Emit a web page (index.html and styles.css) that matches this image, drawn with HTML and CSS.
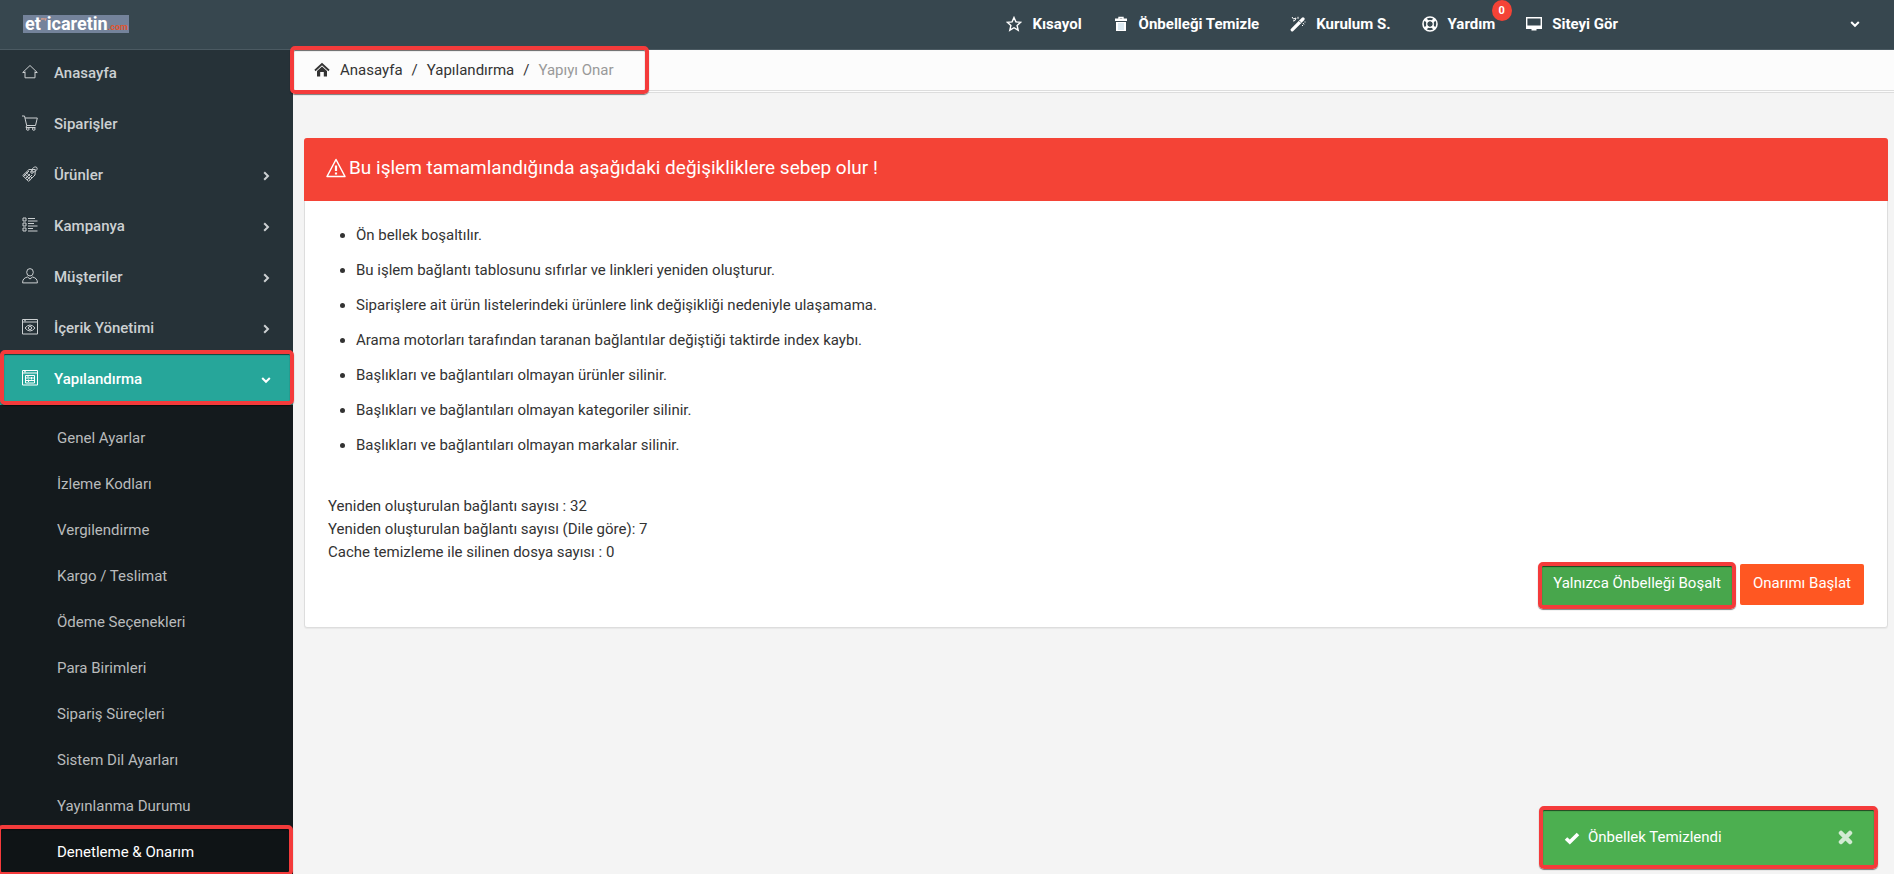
FILE: index.html
```html
<!DOCTYPE html>
<html lang="tr">
<head>
<meta charset="utf-8">
<title>Yapıyı Onar</title>
<link rel="stylesheet" href="styles.css">
</head>
<body>
<header class="topbar">
  <a class="logo" href="#">et<span class="logo-my">my</span>icaretin<span class="logo-com">.com</span></a>
  <nav class="topnav">
    <a href="#"><svg class="icon" viewBox="0 0 16 16"><path d="M8 1.500l1.900 4.400 4.800.4-3.600 3.200 1.100 4.700L8 11.700l-4.200 2.500 1.100-4.700L1.300 6.300l4.800-.4z" fill="none" stroke="currentColor" stroke-width="1.400"/></svg>Kısayol</a>
    <a href="#"><svg class="icon" viewBox="0 0 16 16"><path d="M6 3V1.500h4V3" fill="none" stroke="currentColor" stroke-width="1.400"/><path d="M2 2.500h12v2.500H2zM3 6h10v9H3z" fill="currentColor"/><path d="M6 7v7M8 7v7M10 7v7" stroke="#a5c8dc" stroke-width=".8"/></svg>Önbelleği Temizle</a>
    <a href="#"><svg class="icon" viewBox="0 0 16 16"><path d="M2.200 13.800L13 3" stroke="currentColor" stroke-width="3.200" stroke-linecap="round"/><path d="M9.500 5.200l1.400 1.400" stroke="#37474f"/><path d="M2 1l1.500 2L6 2 5 4.500 3 5M8 .8v2M13 7l1 1.500M15 5.500v1M12.500 9v1" fill="none" stroke="currentColor"/></svg>Kurulum S.</a>
    <a href="#" class="help"><svg class="icon" viewBox="0 0 16 16" fill="none" stroke="currentColor"><circle cx="8" cy="8" r="7" stroke-width="1.600"/><circle cx="8" cy="8" r="3.300" stroke-width="1.300"/><path d="M3 3l3 3M13 3l-3 3M3 13l3-3M13 13l-3-3" stroke-width="3"/></svg>Yardım<span class="badge">0</span></a>
    <a href="#"><svg class="icon" viewBox="0 0 16 16"><path d="M.7 1.700h14.600v10H.7z" fill="none" stroke="currentColor" stroke-width="1.400"/><path d="M0 9.500h16V13h-5.500v1.500h-5V13H0z" fill="currentColor"/></svg>Siteyi Gör</a>
  </nav>
  <button class="account" type="button" aria-label="Hesap"><svg class="arrow" viewBox="0 0 10 10"><path d="M1.200 3L5 6.800 8.800 3"/></svg></button>
</header>
<div class="layout">
  <aside class="sidebar">
    <ul class="menu">
      <li><a href="#"><svg class="icon" viewBox="0 0 16 16"><path d="M3 7.500v6.300h10V7.500M.7 8.500L8 1.500l7.300 7H13M.7 8.500H3"/></svg>Anasayfa</a></li>
      <li><a href="#"><svg class="icon" viewBox="0 0 16 16"><path d="M0 1h2.500l2.200 9.500h8.800L15.300 3H3M4.700 10.500l-.7 2h9.500"/><circle cx="5.800" cy="14" r="1.300"/><circle cx="11.800" cy="14" r="1.300"/></svg>Siparişler</a></li>
      <li><a href="#"><svg class="icon" viewBox="0 0 16 16"><path d="M7 3.500L.8 9.500 6.500 15.300 13 9l.3-5.500zM2.500 8l6 5.800M4 6.500l6 5.500M1.500 10.500L7 5M3.500 12.500L8 8M5 14l5-5"/><circle cx="10" cy="6" r="1.300"/><path d="M10 6c-1-3 2-5.500 4-5s1.500 4-2.500 5"/></svg>Ürünler<svg class="arrow" viewBox="0 0 10 10"><path d="M3.200 1.200L7 5 3.200 8.800"/></svg></a></li>
      <li><a href="#"><svg class="icon" viewBox="0 0 16 16"><path d="M1 1h3v3H1zM1 6h3v3H1zM1 11h3v3H1zM6 1.500h7M6 4h9.500M6 6.500h6M6 9h9.500M6 11.500h5M6 14h9.500"/></svg>Kampanya<svg class="arrow" viewBox="0 0 10 10"><path d="M3.200 1.200L7 5 3.200 8.800"/></svg></a></li>
      <li><a href="#"><svg class="icon" viewBox="0 0 16 16"><ellipse cx="8" cy="4.300" rx="3.300" ry="3.700"/><path d="M5.500 9C2 9.800.6 11.500.6 14.900h14.800c0-3.400-1.400-5.100-4.900-5.900L8 11z"/></svg>Müşteriler<svg class="arrow" viewBox="0 0 10 10"><path d="M3.200 1.200L7 5 3.200 8.800"/></svg></a></li>
      <li><a href="#"><svg class="icon" viewBox="0 0 16 16"><path d="M.5.500h15v14.500H.5zM.5 3h15M2 1.800h2M3 9q5-6 10 0-5 6-10 0z"/><circle cx="8" cy="9" r="1.600"/></svg>İçerik Yönetimi<svg class="arrow" viewBox="0 0 10 10"><path d="M3.200 1.200L7 5 3.200 8.800"/></svg></a></li>
      <li class="open marked"><a href="#"><svg class="icon" viewBox="0 0 16 16"><path d="M.5.500h15v14.500H.5zM.5 3h15M2 1.800h2M3.500 5.500h9v7.500h-9zM3.500 8h9M3.500 10.500h9M6 5v2.500M9.500 7v2.500M6.500 9.500v2.500"/></svg>Yapılandırma<svg class="arrow" viewBox="0 0 10 10"><path d="M1.200 3L5 6.800 8.800 3"/></svg></a></li>
    </ul>
    <ul class="submenu">
      <li><a href="#">Genel Ayarlar</a></li>
      <li><a href="#">İzleme Kodları</a></li>
      <li><a href="#">Vergilendirme</a></li>
      <li><a href="#">Kargo / Teslimat</a></li>
      <li><a href="#">Ödeme Seçenekleri</a></li>
      <li><a href="#">Para Birimleri</a></li>
      <li><a href="#">Sipariş Süreçleri</a></li>
      <li><a href="#">Sistem Dil Ayarları</a></li>
      <li><a href="#">Yayınlanma Durumu</a></li>
      <li class="current marked"><a href="#">Denetleme &amp; Onarım</a></li>
    </ul>
  </aside>
  <main class="content">
    <div class="crumb-bar">
      <nav class="crumbs marked">
        <a href="#"><svg class="icon" viewBox="0 0 16 16"><path d="M1 8.500L8 2l7 6.500" fill="none" stroke="currentColor" stroke-width="1.800"/><path d="M3 9l5-4.500L13 9v5.500H9.800V10H6.200v4.500H3z" fill="currentColor"/></svg>Anasayfa</a>
        <span>/</span><a href="#">Yapılandırma</a><span>/</span><span class="here">Yapıyı Onar</span>
      </nav>
    </div>
    <section class="panel">
      <h1 class="panel-head"><svg class="warn" viewBox="0 0 20 20"><path d="M10 1.500L19 18.500H1z" fill="none" stroke="currentColor" stroke-width="1.500" stroke-linejoin="round"/><path d="M10 7.500v5.500M10 14.500v2" stroke="currentColor" stroke-width="2.200"/></svg>Bu işlem tamamlandığında aşağıdaki değişikliklere sebep olur !</h1>
      <div class="panel-body">
        <ul class="effects">
          <li>Ön bellek boşaltılır.</li>
          <li>Bu işlem bağlantı tablosunu sıfırlar ve linkleri yeniden oluşturur.</li>
          <li>Siparişlere ait ürün listelerindeki ürünlere link değişikliği nedeniyle ulaşamama.</li>
          <li>Arama motorları tarafından taranan bağlantılar değiştiği taktirde index kaybı.</li>
          <li>Başlıkları ve bağlantıları olmayan ürünler silinir.</li>
          <li>Başlıkları ve bağlantıları olmayan kategoriler silinir.</li>
          <li>Başlıkları ve bağlantıları olmayan markalar silinir.</li>
        </ul>
        <p class="result">Yeniden oluşturulan bağlantı sayısı : 32<br>Yeniden oluşturulan bağlantı sayısı (Dile göre): 7<br>Cache temizleme ile silinen dosya sayısı : 0</p>
        <div class="actions">
          <button class="btn btn-green marked" type="button">Yalnızca Önbelleği Boşalt</button>
          <button class="btn btn-orange" type="button">Onarımı Başlat</button>
        </div>
      </div>
    </section>
  </main>
</div>
<div class="toast marked" role="status">
  <svg class="icon" viewBox="0 0 16 16"><path d="M2 8.500l3.800 3.500L14 4" fill="none" stroke="currentColor" stroke-width="3.600"/></svg>
  <span>Önbellek Temizlendi</span>
  <button class="close" type="button" aria-label="Kapat"><svg class="icon" viewBox="0 0 16 16"><path d="M3 3l9 9M12 3L3 12" stroke="currentColor" stroke-width="4.500" stroke-linecap="round"/></svg></button>
</div>
</body>
</html>
```
FILE: styles.css
```css
* { box-sizing: border-box; }

body {
  margin: 0;
  height: 100vh;
  overflow: hidden;
  display: flex;
  flex-direction: column;
  background: #f4f4f4;
  color: #333;
  font: 15px/23px Roboto, sans-serif;
}

a { color: inherit; text-decoration: none; }
ul { margin: 0; padding: 0; list-style: none; }
button { border: 0; padding: 0; background: none; color: inherit; font: inherit; cursor: pointer; }
.icon { width: 16px; height: 16px; flex: none; }
.arrow { width: 10px; height: 10px; fill: none; stroke: currentColor; stroke-width: 2; }

/* Red highlight frame */
.marked { position: relative; }
.marked::after {
  content: "";
  position: absolute;
  z-index: 2;
  inset: -2px;
  border: 4px solid #f43b3b;
  border-radius: 5px;
  box-shadow: 0 1px 1px rgba(0, 0, 0, .5), inset 0 1px 1px rgba(0, 0, 0, .6);
  pointer-events: none;
}

.topbar {
  flex: none;
  display: flex;
  align-items: center;
  height: 50px;
  padding: 0 34px 1px 23px;
  background: #37474f;
  border-bottom: 1px solid #4b5a62;
  color: #fff;
}
.logo {
  display: flex;
  align-items: flex-end;
  padding: 0 1px 0 2px;
  background: #74839b;
  font-size: 18px;
  line-height: 18px;
  font-weight: 700;
}
.logo-com { color: #e0552f; font-size: 9px; line-height: 12px; }
.logo-my { align-self: flex-start; width: 6px; color: #e9a184; font-size: 4px; line-height: 8px; }
.topnav { display: flex; gap: 31px; margin-left: auto; font-weight: 700; }
.topnav a { display: flex; align-items: center; gap: 10px; }
.help { position: relative; }
.badge {
  position: absolute;
  left: 70px;
  top: -13px;
  width: 20px;
  height: 21px;
  border-radius: 50%;
  background: #f44336;
  font-size: 11px;
  line-height: 21px;
  text-align: center;
}
.account { display: flex; margin-left: 232px; }

.layout { flex: 1; display: flex; min-height: 0; }
.sidebar { flex: none; width: 293px; background: #263238; color: #ccd0d2; }
.menu { margin-top: -2px; font-weight: 500; }
.menu a { display: flex; align-items: center; gap: 16px; height: 51px; padding: 0 22px 0 22px; }
.menu .icon { margin-bottom: 4px; fill: none; stroke: currentColor; }
.menu .arrow { margin-left: auto; }
.open { background: #26a69a; color: #fff; }
.submenu { padding-top: 11px; background: #141a1d; color: #b9bbbc; }
.submenu a { display: block; padding: 11px 0 12px 57px; }
.current { background: #0f1416; color: #fff; }
.menu .marked::after { inset: -4px -1px 0 0; }
.submenu .marked::after { inset: -5px 0 0 -3px; }

.content { flex: 1; min-width: 0; }
.crumb-bar {
  display: flex;
  height: 43px;
  background: #fcfcfc;
  border-bottom: 3px double #ddd;
}
.crumbs { display: flex; align-items: center; gap: 9px; padding: 0 35px 0 21px; }
.crumbs a { display: flex; align-items: center; gap: 10px; }
.crumbs.marked::after { inset: -4px 0 -4px -3px; }
.here { color: #999; }

.panel {
  margin: 45px 6px 0 11px;
  background: #fff;
  border: 1px solid #ddd;
  border-radius: 3px;
  box-shadow: 0 1px 1px rgba(0, 0, 0, .05);
}
.panel-head {
  display: flex;
  align-items: center;
  gap: 3px;
  margin: -1px -1px 0;
  padding: 18px 22px 21px;
  background: #f44336;
  border-radius: 3px 3px 0 0;
  color: #fff;
  font-size: 19px;
  line-height: 24px;
  font-weight: 400;
}
.warn { width: 20px; height: 20px; }
.panel-body { padding: 23px 23px 22px; }
.effects { padding-left: 28px; list-style: disc; }
.effects li { margin-bottom: 12px; }
.result { margin: 38px 0 0; }
.actions { display: flex; justify-content: flex-end; gap: 6px; }
.btn { height: 41px; padding: 0 13px 2px; border-radius: 2px; color: #fff; }
.btn-green { background: #48a64c; }
.btn-green.marked::after { inset: -2px -2px -4px; }
.btn-orange { background: #ff5722; }

.toast {
  position: fixed;
  right: 18px;
  bottom: 7px;
  display: flex;
  align-items: center;
  gap: 8px;
  width: 335px;
  height: 59px;
  padding: 0 22px 0 23px;
  background: #4caf50;
  border-radius: 3px;
  color: #fff;
}
.close { display: flex; margin-left: auto; opacity: .75; }
```
